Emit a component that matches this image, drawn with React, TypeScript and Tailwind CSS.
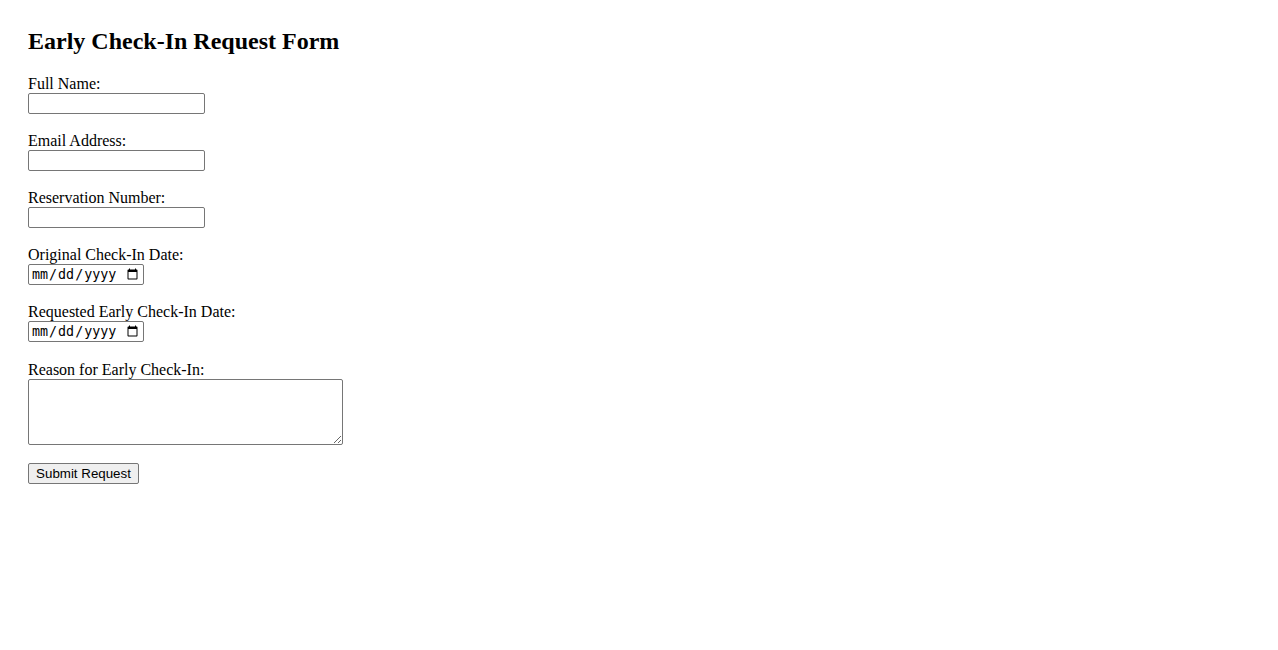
import React from 'react';

const fields = [
  { id: 'fullName', label: 'Full Name:', type: 'text' },
  { id: 'email', label: 'Email Address:', type: 'email' },
  { id: 'reservation', label: 'Reservation Number:', type: 'text' },
  { id: 'originalDate', label: 'Original Check-In Date:', type: 'date' },
  { id: 'requestedDate', label: 'Requested Early Check-In Date:', type: 'date' },
];

export default function App() {
  return (
    <div className="min-h-screen bg-white px-[28px] pt-[28px] font-['Liberation_Serif','Times_New_Roman',serif] text-black">
      <h2 className="text-[24px] font-bold leading-[27px] mb-[20px]">Early Check-In Request Form</h2>
      <form className="flex flex-col items-start" onSubmit={(e) => e.preventDefault()}>
        {fields.map((f) => (
          <div key={f.id} className="flex flex-col items-start mb-[18px]">
            <label htmlFor={f.id} className="text-[16px] leading-[18px]">
              {f.label}
            </label>
            {f.type === 'date' ? (
              <input
                id={f.id}
                type="date"
                className="w-[116px] h-[21px] border border-[#767676] rounded-[2px] pl-[2px] pr-[2px] text-[13.33px] font-['DejaVu_Sans_Mono','Liberation_Mono',monospace] text-black bg-white"
              />
            ) : (
              <input
                id={f.id}
                type={f.type}
                className="w-[177px] h-[21px] border border-[#767676] rounded-[2px] px-[2px] text-[13.33px] font-['Liberation_Sans',Arial,sans-serif] bg-white"
              />
            )}
          </div>
        ))}
        <div className="flex flex-col items-start mb-[18px]">
          <label htmlFor="reason" className="mt-[1px] text-[16px] leading-[18px]">
            Reason for Early Check-In:
          </label>
          <textarea
            id="reason"
            className="w-[315px] h-[66px] border border-[#767676] rounded-[2px] p-[2px] text-[13.33px] font-['Liberation_Mono',monospace] resize bg-white"
          />
        </div>
        <button
          type="submit"
          className="w-[111px] h-[21px] px-[6px] border border-[#767676] rounded-[2px] bg-[#efefef] text-[13.33px] leading-[16px] font-['Liberation_Sans',Arial,sans-serif] text-black"
        >
          Submit Request
        </button>
      </form>
    </div>
  );
}
